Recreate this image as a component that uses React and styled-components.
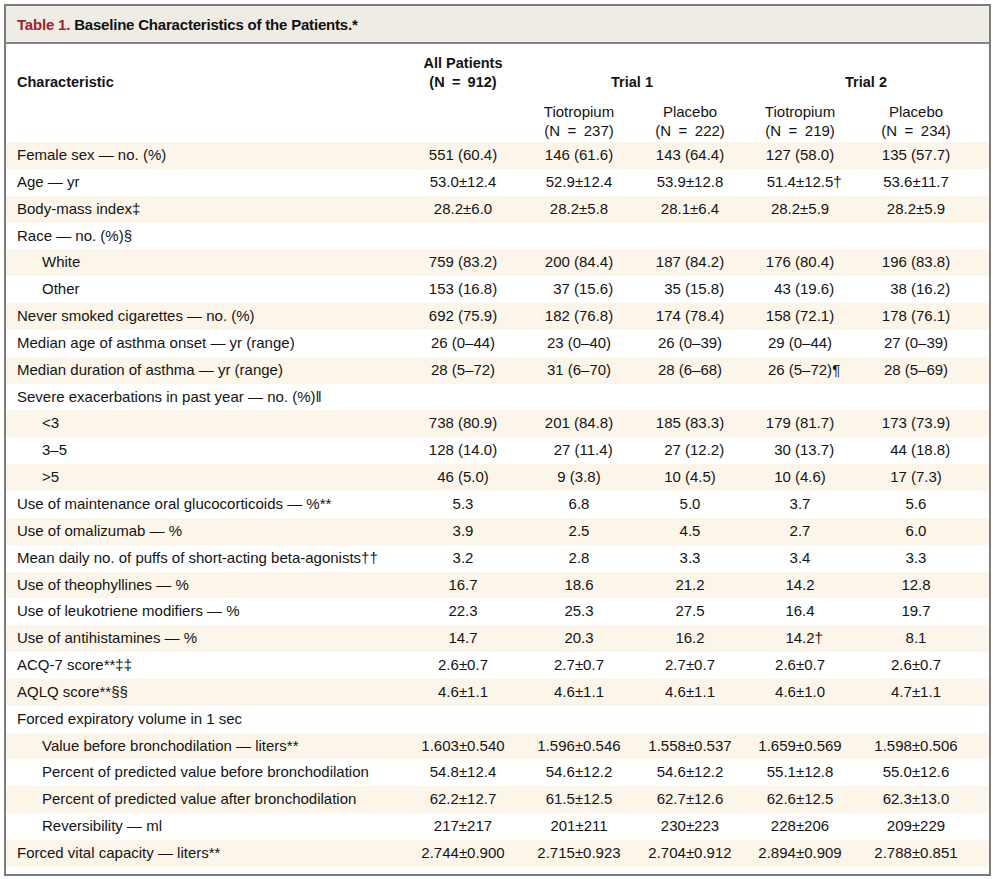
import React from 'react';
import styled, { createGlobalStyle } from 'styled-components';

const GlobalStyle = createGlobalStyle`
  html, body {
    margin: 0;
    padding: 0;
    background: #fff;
  }
  body {
    font-family: "Liberation Sans", Arial, sans-serif;
    color: #141414;
  }
`

const Frame = styled.div`
  margin: 4px 2px 0 4px;
  width: 983px;
  border: 2px solid #7c7c7c;
  background: #fff;
`

const TitleBar = styled.div`
  height: 36px;
  display: flex;
  align-items: center;
  padding-left: 11px;
  background: #efebe5;
  border-bottom: 2px solid #858585;
  font-size: 15px;
  font-weight: 700;
  letter-spacing: -0.2px;
  color: #111;

  .num {
    color: #a31f2e;
    margin-right: 4px;
  }
`

const Table = styled.table`
  width: 100%;
  border-collapse: collapse;
  border-spacing: 0;
  table-layout: fixed;
  font-size: 15px;
`

const HeadCell = styled.th`
  font-weight: ${p => (p.$bold ? 700 : 400)};
  font-size: ${p => (p.$bold ? '14.5px' : '15px')};
  text-align: ${p => (p.$left ? 'left' : 'center')};
  vertical-align: bottom;
  line-height: 19px;
  padding: ${p => p.$pad || '10px 0 0 0'};
  padding-left: ${p => (p.$left ? '11px' : '0')};
  padding-right: ${p => (p.$last ? '14px' : '0')};
  white-space: nowrap;
`

const Row = styled.tr`
  height: 26.85px;
  background: ${p => (p.$shaded ? '#fcf6ea' : '#fff')};
`

const Label = styled.td`
  padding: 0 0 0 ${p => (p.$indent ? '36px' : '11px')};
  white-space: nowrap;
  line-height: 26.85px;
`

const Value = styled.td`
  padding: 0;
  text-align: center;
  white-space: pre;
  line-height: 26.85px;
  padding-right: ${p => (p.$last ? '14px' : '0')};
`

const Empty = styled.td`
  padding: 0;
`

const Mark = styled.span`
  display: inline-block;
  width: 10px;
  margin-right: -10px;
  text-align: left;
`

const Spacer = styled.tr`
  height: 7px;
`

const f = '\u2007';
const n = count => `(N\u2002=\u2002${count})`;

const rows = [
  ['Female sex — no. (%)', 0, ['551 (60.4)', '146 (61.6)', '143 (64.4)', '127 (58.0)', '135 (57.7)']],
  ['Age — yr', 0, ['53.0±12.4', '52.9±12.4', '53.9±12.8', ['51.4±12.5', '†'], '53.6±11.7']],
  ['Body-mass index‡', 0, ['28.2±6.0', '28.2±5.8', '28.1±6.4', '28.2±5.9', '28.2±5.9']],
  ['Race — no. (%)§', 0, null],
  ['White', 1, ['759 (83.2)', '200 (84.4)', '187 (84.2)', '176 (80.4)', '196 (83.8)']],
  ['Other', 1, ['153 (16.8)', f + '37 (15.6)', f + '35 (15.8)', f + '43 (19.6)', f + '38 (16.2)']],
  ['Never smoked cigarettes — no. (%)', 0, ['692 (75.9)', '182 (76.8)', '174 (78.4)', '158 (72.1)', '178 (76.1)']],
  ['Median age of asthma onset — yr (range)', 0, ['26 (0–44)', '23 (0–40)', '26 (0–39)', '29 (0–44)', '27 (0–39)']],
  ['Median duration of asthma — yr (range)', 0, ['28 (5–72)', '31 (6–70)', '28 (6–68)', ['26 (5–72)', '¶'], '28 (5–69)']],
  ['Severe exacerbations in past year — no. (%)‖', 0, null],
  ['<3', 1, ['738 (80.9)', '201 (84.8)', '185 (83.3)', '179 (81.7)', '173 (73.9)']],
  ['3–5', 1, ['128 (14.0)', f + '27 (11.4)', f + '27 (12.2)', f + '30 (13.7)', f + '44 (18.8)']],
  ['>5', 1, ['46 (5.0)', '9 (3.8)', '10 (4.5)', '10 (4.6)', '17 (7.3)']],
  ['Use of maintenance oral glucocorticoids — %**', 0, ['5.3', '6.8', '5.0', '3.7', '5.6']],
  ['Use of omalizumab — %', 0, ['3.9', '2.5', '4.5', '2.7', '6.0']],
  ['Mean daily no. of puffs of short-acting beta-agonists††', 0, ['3.2', '2.8', '3.3', '3.4', '3.3']],
  ['Use of theophyllines — %', 0, ['16.7', '18.6', '21.2', '14.2', '12.8']],
  ['Use of leukotriene modifiers — %', 0, ['22.3', '25.3', '27.5', '16.4', '19.7']],
  ['Use of antihistamines — %', 0, ['14.7', '20.3', '16.2', ['14.2', '†'], '8.1']],
  ['ACQ-7 score**‡‡', 0, ['2.6±0.7', '2.7±0.7', '2.7±0.7', '2.6±0.7', '2.6±0.7']],
  ['AQLQ score**§§', 0, ['4.6±1.1', '4.6±1.1', '4.6±1.1', '4.6±1.0', '4.7±1.1']],
  ['Forced expiratory volume in 1 sec', 0, null],
  ['Value before bronchodilation — liters**', 1, ['1.603±0.540', '1.596±0.546', '1.558±0.537', '1.659±0.569', '1.598±0.506']],
  ['Percent of predicted value before bronchodilation', 1, ['54.8±12.4', '54.6±12.2', '54.6±12.2', '55.1±12.8', '55.0±12.6']],
  ['Percent of predicted value after bronchodilation', 1, ['62.2±12.7', '61.5±12.5', '62.7±12.6', '62.6±12.5', '62.3±13.0']],
  ['Reversibility — ml', 1, ['217±217', '201±211', '230±223', '228±206', '209±229']],
  ['Forced vital capacity — liters**', 0, ['2.744±0.900', '2.715±0.923', '2.704±0.912', '2.894±0.909', '2.788±0.851']],
];

const renderValue = v => {
  if (Array.isArray(v)) {
    return (
      <>
        {v[0]}
        <Mark>{v[1]}</Mark>
      </>
    );
  }
  return v;
};

export default function App() {
  return (
    <>
      <GlobalStyle />
      <Frame>
        <TitleBar>
          <span className="num">Table 1.</span>
          Baseline Characteristics of the Patients.*
        </TitleBar>
        <Table>
          <colgroup>
            <col style={{ width: '399px' }} />
            <col style={{ width: '116px' }} />
            <col style={{ width: '116px' }} />
            <col style={{ width: '106px' }} />
            <col style={{ width: '114px' }} />
            <col />
          </colgroup>
          <thead>
            <tr>
              <HeadCell $bold $left>Characteristic</HeadCell>
              <HeadCell $bold>All Patients<br />{n(912)}</HeadCell>
              <HeadCell $bold colSpan={2}>Trial 1</HeadCell>
              <HeadCell $bold colSpan={2}>Trial 2</HeadCell>
            </tr>
            <tr>
              <HeadCell $left />
              <HeadCell />
              <HeadCell $pad="10px 0 2px 0">Tiotropium<br />{n(237)}</HeadCell>
              <HeadCell $pad="10px 0 2px 0">Placebo<br />{n(222)}</HeadCell>
              <HeadCell $pad="10px 0 2px 0">Tiotropium<br />{n(219)}</HeadCell>
              <HeadCell $pad="10px 0 2px 0" $last>Placebo<br />{n(234)}</HeadCell>
            </tr>
          </thead>
          <tbody>
            {rows.map(([label, indent, values], i) => (
              <Row key={label} $shaded={i % 2 === 0}>
                <Label $indent={indent}>{label}</Label>
                {values
                  ? values.map((v, j) => (
                      <Value key={j} $last={j === 4}>{renderValue(v)}</Value>
                    ))
                  : <Empty colSpan={5} />}
              </Row>
            ))}
            <Spacer><Empty colSpan={6} /></Spacer>
          </tbody>
        </Table>
      </Frame>
    </>
  );
}
